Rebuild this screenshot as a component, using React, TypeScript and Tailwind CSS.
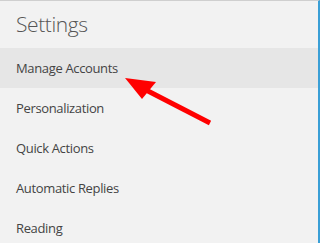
import React from "react";

const items = ["Manage Accounts", "Personalization", "Quick Actions", "Automatic Replies", "Reading"];

export default function App() {
  return (
    <div className="relative w-[320px] h-[243px] overflow-hidden bg-[#f2f2f2] border-t border-[#cfcfcf] border-r-2 border-r-[#3a9fd6]" style={{ fontFamily: '"Open Sans", "Noto Sans", sans-serif' }}>
      <div className="h-[47px] pl-4 pt-[8px] text-[21px] font-light tracking-[-0.4px] text-[#555] leading-[30px]">Settings</div>
      <div className="flex flex-col">
        {items.map((t, i) => (
          <div key={t} className={`h-10 flex items-center pl-4 pt-[2px] text-[13px] tracking-[-0.35px] text-[#444] ${i === 0 ? "bg-[#e6e6e6]" : ""}`}>
            {t}
          </div>
        ))}
      </div>
      <svg className="absolute left-0 top-0" width="320" height="243" viewBox="0 0 320 243">
        <line x1="146" y1="89" x2="210" y2="122" stroke="#f00" strokeWidth="5" />
        <polygon points="125,77 156,81 142,98" fill="#f00" />
      </svg>
    </div>
  );
}
